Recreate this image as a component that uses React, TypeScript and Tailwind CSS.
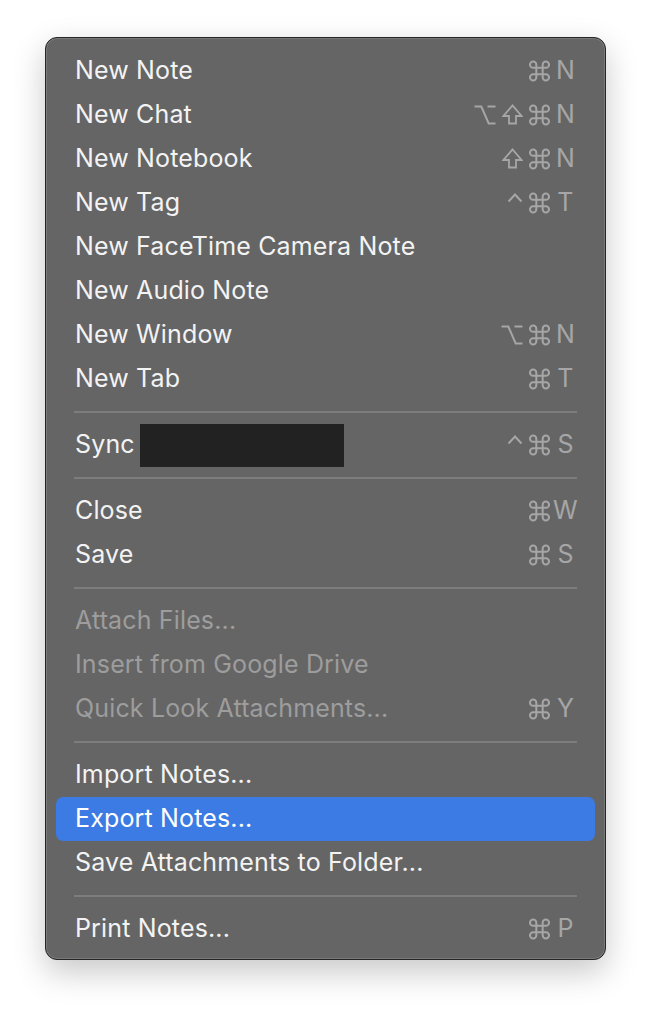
import type { ReactNode } from 'react';

type Mod = 'cmd' | 'opt' | 'shift' | 'ctrl';

type Item =
  | { kind: 'sep' }
  | {
      kind: 'item';
      label: string;
      mods?: Mod[];
      keyChar?: string;
      disabled?: boolean;
      active?: boolean;
      redact?: boolean;
    };

const items: Item[] = [
  { kind: 'item', label: 'New Note', mods: ['cmd'], keyChar: 'N' },
  { kind: 'item', label: 'New Chat', mods: ['opt', 'shift', 'cmd'], keyChar: 'N' },
  { kind: 'item', label: 'New Notebook', mods: ['shift', 'cmd'], keyChar: 'N' },
  { kind: 'item', label: 'New Tag', mods: ['ctrl', 'cmd'], keyChar: 'T' },
  { kind: 'item', label: 'New FaceTime Camera Note' },
  { kind: 'item', label: 'New Audio Note' },
  { kind: 'item', label: 'New Window', mods: ['opt', 'cmd'], keyChar: 'N' },
  { kind: 'item', label: 'New Tab', mods: ['cmd'], keyChar: 'T' },
  { kind: 'sep' },
  { kind: 'item', label: 'Sync', mods: ['ctrl', 'cmd'], keyChar: 'S', redact: true },
  { kind: 'sep' },
  { kind: 'item', label: 'Close', mods: ['cmd'], keyChar: 'W' },
  { kind: 'item', label: 'Save', mods: ['cmd'], keyChar: 'S' },
  { kind: 'sep' },
  { kind: 'item', label: 'Attach Files...', disabled: true },
  { kind: 'item', label: 'Insert from Google Drive', disabled: true },
  { kind: 'item', label: 'Quick Look Attachments...', mods: ['cmd'], keyChar: 'Y', disabled: true },
  { kind: 'sep' },
  { kind: 'item', label: 'Import Notes...' },
  { kind: 'item', label: 'Export Notes...', active: true },
  { kind: 'item', label: 'Save Attachments to Folder...' },
  { kind: 'sep' },
  { kind: 'item', label: 'Print Notes...', mods: ['cmd'], keyChar: 'P' },
];

// modifier key glyphs, drawn in a 22px tall box centred on the row
const ModIcon = ({ mod }: { mod: Mod }) => {
  let body: ReactNode = null;
  let w = 21;
  let vb = '0 0 21 22';
  if (mod === 'cmd') {
    vb = '2.1 1.6 19.8 20.8';
    body = (
      <path
        strokeWidth={1.9}
        strokeLinecap="round"
        strokeLinejoin="round"
        d="M15 6v12a3 3 0 1 0 3-3H6a3 3 0 1 0 3 3V6a3 3 0 1 0-3 3h12a3 3 0 1 0-3-3"
      />
    );
  } else if (mod === 'opt') {
    w = 22;
    vb = '0 0 22 22';
    body = (
      <g strokeWidth={2}>
        <path d="M0.5 2.5h6.8l7.4 17h6.8" />
        <path d="M13.5 2.5h8" />
      </g>
    );
  } else if (mod === 'shift') {
    body = <path strokeWidth={1.8} strokeLinejoin="miter" d="M7 19.5v-7.5H1.5L10.5 1.5 19.5 12H14v7.5z" />;
  } else {
    w = 16;
    vb = '0 0 16 22';
    body = <path strokeWidth={2} d="M1.5 9.5L8 2.5l6.5 7" />;
  }
  return (
    <svg
      viewBox={vb}
      width={w}
      height={22}
      fill="none"
      stroke="currentColor"
      className="shrink-0"
    >
      {body}
    </svg>
  );
};

const Shortcut = ({ mods, keyChar }: { mods: Mod[]; keyChar: string }) => (
  <div className="flex items-center">
    <div className="flex items-center gap-[6px]">
      {mods.map((m, i) => (
        <ModIcon key={i} mod={m} />
      ))}
    </div>
    <span className="w-[31px] text-center">{keyChar}</span>
  </div>
);

export default function App() {
  return (
    <div
      className="min-h-screen bg-white pl-[45px] pt-[37px]"
      style={{ fontFamily: 'Inter, "Noto Sans", sans-serif' }}
    >
      <div className="w-[561px] rounded-[12px] border border-[#262626] bg-[#656565] px-[10px] pt-[11px] pb-[8px] shadow-[inset_0_0_0_1px_rgba(255,255,255,0.14),0_12px_32px_rgba(0,0,0,0.22)]">
        {items.map((item, i) => {
          if (item.kind === 'sep') {
            return (
              <div key={i} className="h-[22px] flex items-center px-[18px]">
                <div className="h-[2px] w-full bg-[#7d7d7d]" />
              </div>
            );
          }
          const textColor = item.active
            ? 'text-white'
            : item.disabled
              ? 'text-[#9d9d9d]'
              : 'text-[#f3f3f3]';
          const scColor = item.active ? 'text-white' : 'text-[#a6a6a6]';
          return (
            <div
              key={i}
              className={`h-[44px] flex items-center pl-[19px] pr-[14px] rounded-[7px] text-[25px] tracking-[0.15px] ${
                item.active ? 'bg-[#3b7be3]' : ''
              }`}
            >
              <span className={`${textColor} flex-1 flex items-center`}>
                {item.label}
                {item.redact && (
                  <span className="ml-[5px] inline-block w-[204px] h-[43px] bg-[#222222]" />
                )}
              </span>
              {item.mods && item.keyChar && (
                <span className={scColor}>
                  <Shortcut mods={item.mods} keyChar={item.keyChar} />
                </span>
              )}
            </div>
          );
        })}
      </div>
    </div>
  );
}
